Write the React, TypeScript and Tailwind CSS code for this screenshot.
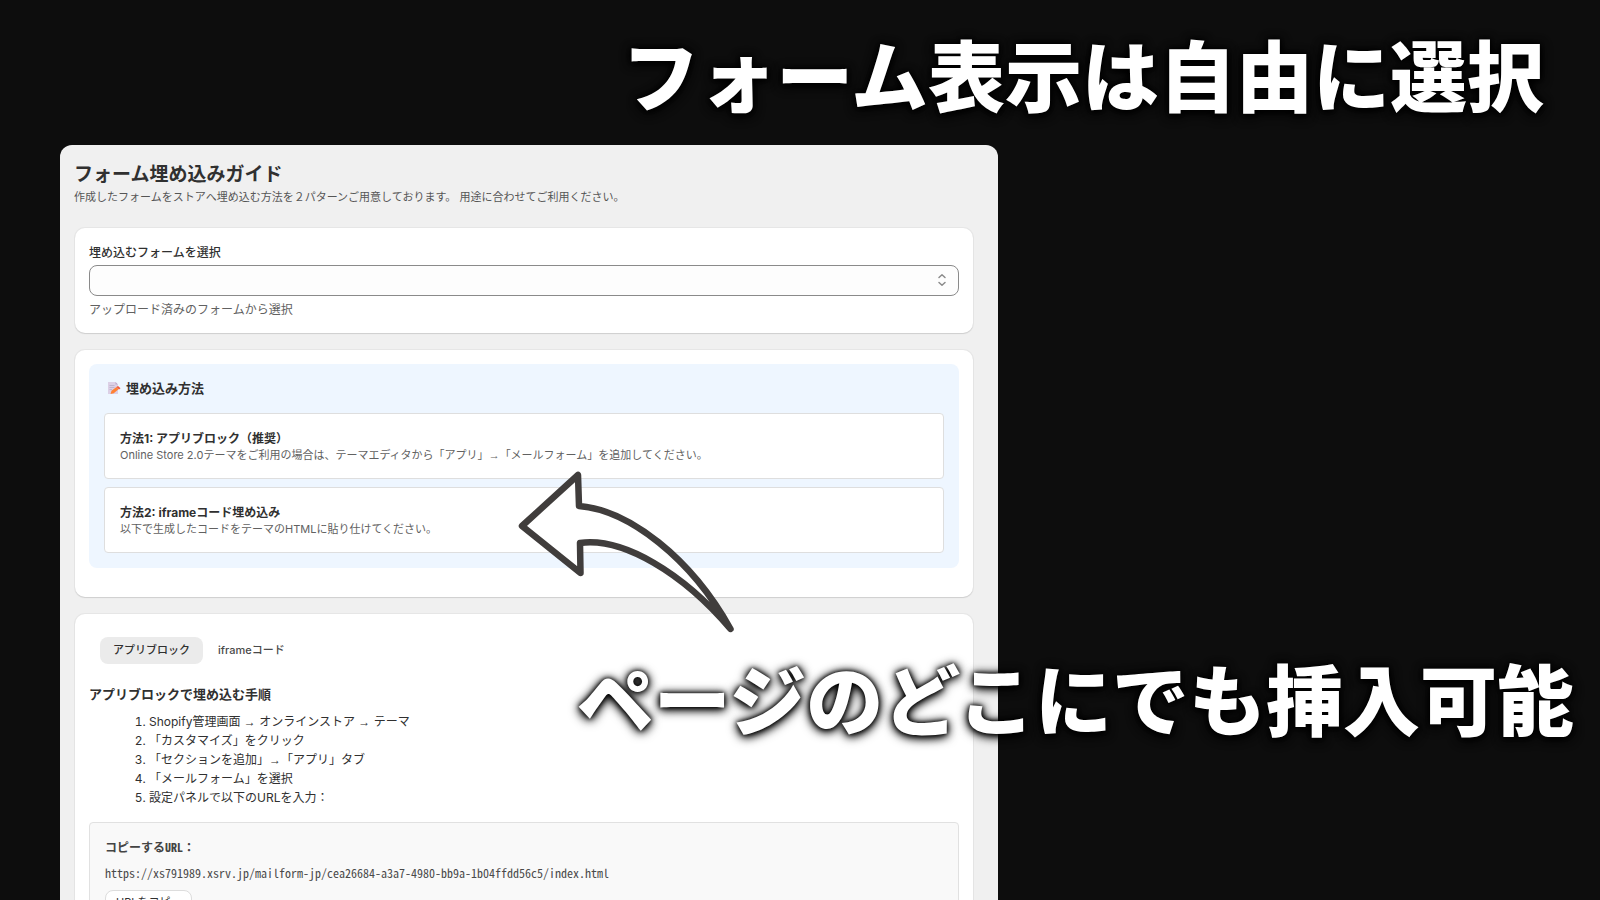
import React from "react";

const steps = [
  "Shopify管理画面 → オンラインストア → テーマ",
  "「カスタマイズ」をクリック",
  "「セクションを追加」→「アプリ」タブ",
  "「メールフォーム」を選択",
  "設定パネルで以下のURLを入力：",
];

const methods = [
  {
    title: "方法1: アプリブロック（推奨）",
    body: "Online Store 2.0テーマをご利用の場合は、テーマエディタから「アプリ」→「メールフォーム」を追加してください。",
  },
  {
    title: "方法2: iframeコード埋め込み",
    body: "以下で生成したコードをテーマのHTMLに貼り仕けてください。",
  },
];

const headline =
  "whitespace-nowrap text-[77px] leading-[80px] font-black text-white [text-shadow:0_0_4px_#000,0_1px_8px_#000,0_2px_12px_#000]";

function Card({ children }: { children: React.ReactNode }) {
  return (
    <section className="rounded-[10px] bg-white p-[14px] shadow-[0_1px_1px_#cfcfcf,0_0_0_1px_#e6e6e6]">
      {children}
    </section>
  );
}

// Sets arrows in a face whose arrow is small and light.
function ArrowText({ text }: { text: string }) {
  return (
    <>
      {text.split("→").map((part, i) => (
        <React.Fragment key={i}>
          {i > 0 && <span className="font-['Liberation_Sans',sans-serif] leading-none font-bold">→</span>}
          {part}
        </React.Fragment>
      ))}
    </>
  );
}

function MemoIcon() {
  return (
    <svg viewBox="0 0 14 14" className="size-[14px]" aria-hidden="true">
      <path d="M1 1h7.5L11 3.5V13H1z" fill="#dcd0e6" />
      <path d="M8.500 1v2.500H11z" fill="#b9a9c9" />
      <path d="M2.500 4.500h5M2.500 6.500h5M2.500 8.500h2.500" stroke="#b9aec8" strokeWidth=".8" />
      <path d="M3.500 13l1-3.200 5-3.800 2 2.200-4.700 4z" fill="#ff8133" />
      <path d="M9.500 6l1.500-1 2.500 2.200-1.500 1.300z" fill="#f2553a" />
    </svg>
  );
}

export default function App() {
  return (
    <main className="relative flex h-screen flex-col overflow-hidden bg-[#0d0d0d] pl-[60px] font-['Inter','Noto_Sans_CJK_JP',sans-serif] text-[#303030]">
      <h1 className={`${headline} shrink-0 self-end pt-[38px] pr-[56px] pb-[27px]`}>フォーム表示は自由に選択</h1>

      <div className="w-[58.6vw] shrink-0 rounded-t-xl bg-[#f0f0f0] pt-[18px] pr-[25px] pb-8 pl-[14px]">
        <header className="mb-[21px]">
          <h2 className="text-[19px] leading-[24px] font-bold">フォーム埋め込みガイド</h2>
          <p className="text-[11px] leading-[20px] text-[#555555]">
            作成したフォームをストアへ埋め込む方法を２パターンご用意しております。 用途に合わせてご利用ください。
          </p>
        </header>

        <div className="ml-px flex flex-col gap-[17px]">
          <Card>
            <label htmlFor="form" className="block text-[12px] leading-[21px] font-medium">
              埋め込むフォームを選択
            </label>
            <div className="relative mt-[2px]">
              <select
                id="form"
                className="block h-[31px] w-full appearance-none rounded-lg border border-[#8a8a8a] bg-[#fdfdfd] px-3 text-[12px]"
              >
                <option value=""></option>
              </select>
              <svg
                viewBox="0 0 10 14"
                className="pointer-events-none absolute top-[8px] right-[12px] h-[14px] w-[10px]"
                fill="none"
                stroke="#8a8a8a"
                strokeWidth="1.500"
                strokeLinecap="round"
                strokeLinejoin="round"
                aria-hidden="true"
              >
                <path d="M2 4.500L5 1.800l3 2.700M2 9.500l3 2.700 3-2.700" />
              </svg>
            </div>
            <p className="mt-[5px] text-[12px] leading-[18px] text-[#616161]">アップロード済みのフォームから選択</p>
          </Card>

          <Card>
            <div className="mb-[15px] rounded-lg bg-[#eef6ff] p-[15px]">
              <h3 className="flex items-center gap-[5px] pl-[3px] text-[13px] leading-[18px] font-bold">
                <MemoIcon />
                埋め込み方法
              </h3>
              <div className="mt-[16px] flex flex-col gap-[8px]">
                {methods.map((m) => (
                  <article
                    key={m.title}
                    className="rounded border border-[#dedede] bg-white px-[15px] pt-[17px] pb-[15px]"
                  >
                    <h4 className="text-[12px] leading-[16px] font-bold">{m.title}</h4>
                    <p className="text-[11px] leading-[16px] text-[#616161]">
                      <ArrowText text={m.body} />
                    </p>
                  </article>
                ))}
              </div>
            </div>
          </Card>

          <Card>
            <div className="flex px-[11px] pt-[9px] text-[11px] leading-[27px] font-medium" role="tablist">
              <button role="tab" aria-selected="true" className="rounded-lg bg-[#ebebeb] px-[13px]">
                アプリブロック
              </button>
              <button role="tab" aria-selected="false" className="px-[15px] text-[#4a4a4a]">
                iframeコード
              </button>
            </div>
            <h3 className="mt-[20px] text-[13px] leading-[20px] font-bold">アプリブロックで埋め込む手順</h3>
            <ol className="mt-[8px] list-decimal pl-[60px] text-[12px] leading-[19px]">
              {steps.map((s) => (
                <li key={s}>
                  <ArrowText text={s} />
                </li>
              ))}
            </ol>
            <div className="mt-[15px] rounded border border-[#e1e1e1] bg-[#f9f9f9] p-[15px] font-['Noto_Sans_Mono_CJK_JP','Noto_Sans_CJK_JP',monospace] text-[12px]">
              <p className="leading-[18px] font-bold text-[#444444]">コピーするURL：</p>
              <p className="mt-[7px] leading-[20px] text-[#4a4a4a]">
                https://xs791989.xsrv.jp/mailform-jp/cea26684-a3a7-4980-bb9a-1b04ffdd56c5/index.html
              </p>
              <button className="mt-[7px] rounded-lg border border-[#dddddd] bg-white px-[10px] font-['Inter','Noto_Sans_CJK_JP',sans-serif] text-[11px] leading-[22px]">
                URLをコピー
              </button>
            </div>
          </Card>
        </div>
      </div>

      <svg
        viewBox="0 0 220 165"
        className="absolute top-[470px] left-[517px] h-[165px] w-[220px]"
        fill="none"
        stroke="#403d3c"
        strokeWidth="6.500"
        strokeLinecap="round"
        strokeLinejoin="round"
        aria-hidden="true"
      >
        <path
          fill="#ffffff"
          d="M5 56L61 5L62 36C112 40 174 88 213.500 159C166 103 106 67 63 73L63.500 103Z"
        />
      </svg>

      <p className={`${headline} absolute top-[662px] right-[26px]`}>ページのどこにでも挿入可能</p>
    </main>
  );
}
